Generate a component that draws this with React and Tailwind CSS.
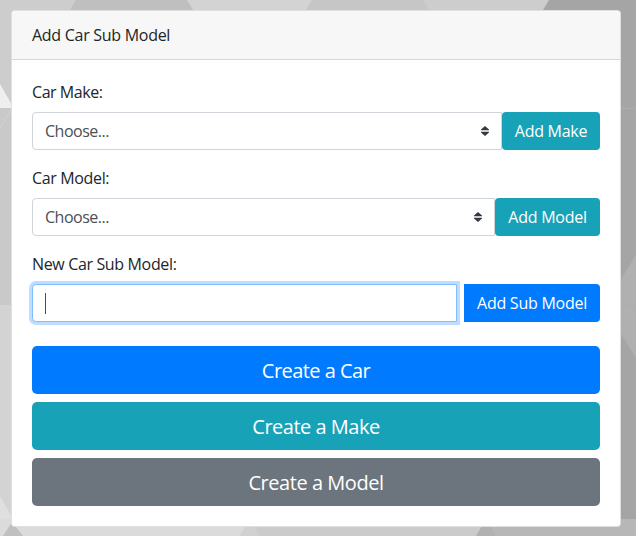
function Label({ className, children }) {
  return (
    <div className="mb-2 h-6">
      <span className={className}>{children}</span>
    </div>
  );
}

function Select() {
  return (
    <div className="flex h-[38px] min-w-0 flex-1 items-center justify-between rounded-l border border-[#ced4da] bg-white pl-3 pr-3 text-[#495057]">
      <span className="tracking-[-0.5px]">Choose...</span>
      <svg width="8" height="10" viewBox="0 0 8 10" fill="#343a40">
        <path d="M4 0L8 3.6V4.2H0V3.6zM4 10L8 6.4V5.8H0V6.4z" />
      </svg>
    </div>
  );
}

function Backdrop() {
  return (
    <svg className="absolute inset-0" width="636" height="536">
      <rect width="636" height="536" fill="#cdcdcd" />
      <path d="M187 0H320V20H199z" fill="#d3d3d3" />
      <path d="M76 0H187L199 20H64z" fill="#bfbfbf" />
      <path d="M312 0H423L435 20H300z" fill="#c6c6c6" />
      <path d="M549 0H636V536H500V20H537z" fill="#a5a5a5" />
      <path d="M0 84L12 105V108H0z" fill="#efefef" />
      <path d="M0 108H12V305H0z" fill="#c9c9c9" />
      <path d="M0 305H12V536H0z" fill="#d3d3d3" />
      <path d="M12 108L0 128" stroke="#d2d2d2" fill="none" />
      <path d="M0 496L12 517V536H0z" fill="#dfdfdf" />
      <path d="M0 519H270V536H0z" fill="#dbdbdb" />
      <path d="M12 522L3 536H23z" fill="#c0c0c0" />
      <path d="M636 254L620 281V332L636 358z" fill="#b0b0b0" />
      <path d="M620 108.5H636M620 305.5H636" stroke="#adadad" />
      <path d="M250 519H500V536H240z" fill="#cbcbcb" />
      <path d="M250 519L240 536H260z" fill="#d1d1d1" />
      <path d="M491 519H636V536H476z" fill="#b7b7b7" />
      <path d="M486 519L476 536H496z" fill="#b1b1b1" />
    </svg>
  );
}

export default function App() {
  return (
    <div className="relative h-[536px] w-[636px] overflow-hidden pl-[11px] pt-[10px] font-['Open_Sans','Noto_Sans',sans-serif] text-base leading-6 text-[#212529]">
      <Backdrop />
      <main className="relative h-[517px] w-[610px] rounded border border-black/[.125] bg-white bg-clip-border">
        <header className="rounded-t-[3px] border-b border-black/[.125] bg-[#f7f7f7] px-5 py-3">
          <span className="tracking-[-0.28px]">Add Car Sub Model</span>
        </header>
        <div className="p-5">
          <Label className="tracking-[-0.45px]">Car Make:</Label>
          <div className="mb-4 flex">
            <Select />
            <button className="h-[38px] w-[98px] rounded bg-[#17a2b8] whitespace-nowrap text-white tracking-[-0.28px]">Add Make</button>
          </div>
          <Label className="tracking-[-0.35px]">Car Model:</Label>
          <div className="mb-4 flex">
            <Select />
            <button className="h-[38px] w-[105px] rounded bg-[#17a2b8] whitespace-nowrap text-white tracking-[-0.25px]">Add Model</button>
          </div>
          <Label className="tracking-[-0.35px]">New Car Sub Model:</Label>
          <div className="mb-6 flex justify-between">
            <div className="flex h-[38px] w-[425px] items-center rounded-l border border-[#80bdff] bg-white pl-3 shadow-[0_0_0_3px_#bfdeff]">
              <span className="h-[21px] w-px bg-[#495057]" />
            </div>
            <button className="h-[38px] w-[136px] rounded-r bg-[#007bff] whitespace-nowrap text-white tracking-[-0.25px]">Add Sub Model</button>
          </div>
          <div className="flex flex-col gap-2 text-xl text-white">
            <button className="h-12 rounded-[5px] bg-[#007bff] pt-0.5 tracking-[-0.55px]">Create a Car</button>
            <button className="h-12 rounded-[5px] bg-[#17a2b8] pt-0.5 tracking-[-0.5px]">Create a Make</button>
            <button className="h-12 rounded-[5px] bg-[#6c757d] pt-0.5 tracking-[-0.45px]">Create a Model</button>
          </div>
        </div>
      </main>
    </div>
  );
}
